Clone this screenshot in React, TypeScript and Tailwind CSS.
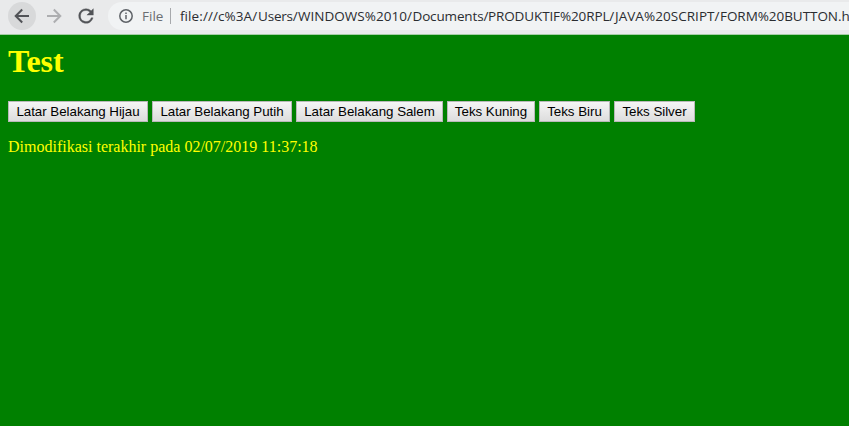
import { useState } from "react";

const pieces = [
  { text: "file:///c%3A/", style: "w-[78px] tracking-[0.08px]" },
  { text: "Users/", style: "w-[40px] tracking-[-0.2px]" },
  { text: "WINDOWS%2010/", style: "w-[114.5px] tracking-[0.03px]" },
  { text: "Documents/", style: "w-[75.5px] tracking-[-0.15px]" },
  { text: "PRODUKTIF%20RPL/", style: "w-[127px] tracking-[-0.12px]" },
  { text: "JAVA%20SCRIPT/", style: "w-[105px] tracking-[0.05px]" },
  { text: "FORM%20BUTTON.h", style: "w-[129px] tracking-[-0.05px]" },
];

const actions = [
  { label: "Latar Belakang Hijau", width: "w-[140px]", background: "#008000" },
  { label: "Latar Belakang Putih", width: "w-[140px]", background: "#ffffff" },
  { label: "Latar Belakang Salem", width: "w-[147px]", background: "#fa8072" },
  { label: "Teks Kuning", width: "w-[88px]", color: "#ffff00" },
  { label: "Teks Biru", width: "w-[71px]", color: "#0000ff" },
  { label: "Teks Silver", width: "w-[81px]", color: "#c0c0c0" },
];

function Toolbar() {
  return (
    <header className="flex h-[35px] items-start overflow-hidden border-b border-[#a5cda5] bg-[#e9eaeb] pl-2 font-['Open_Sans','Noto_Sans',sans-serif] text-[13.5px]">
      <div className="mt-[2px] flex size-7 shrink-0 items-center justify-center rounded-full bg-[#d8d9da]">
        <svg width="24" height="24" viewBox="0 0 24 24" fill="none" stroke="#515357" strokeWidth="2">
          <path d="M19 12H6M12.2 5.5 5.7 12l6.5 6.5" />
        </svg>
      </div>
      <svg className="mt-[4px] ml-[6px] shrink-0" width="24" height="24" viewBox="0 0 24 24" fill="none" stroke="#adaeb0" strokeWidth="2">
        <path d="M5 12h13M11.8 5.5l6.5 6.5-6.5 6.5" />
      </svg>
      <svg className="mt-[5px] ml-[9px] shrink-0" width="22" height="22" viewBox="0 0 24 24" fill="#515357" stroke="#515357" strokeWidth="0.4">
        <path d="M17.65 6.35A7.96 7.96 0 0 0 12 4a8 8 0 1 0 7.73 10h-2.08A6 6 0 1 1 12 6c1.66 0 3.14.69 4.22 1.78L13 11h7V4z" />
      </svg>
      <div className="mt-[2px] ml-[11px] flex h-7 w-[760px] shrink-0 items-center rounded-l-full bg-[#f1f3f4] pl-[11px]">
        <svg className="shrink-0" width="14" height="14" viewBox="0 0 14 14" fill="none" stroke="#5f6368" strokeWidth="1.5">
          <circle cx="7" cy="7" r="6.2" />
          <path d="M7 6v4.3M7 3.5V5" />
        </svg>
        <span className="ml-[9px] w-[28px] shrink-0 text-[#6b6e72]">File</span>
        <span className="h-4 w-px shrink-0 bg-[#a7a9ac]" />
        <div className="ml-[9px] flex whitespace-nowrap text-[#2b2d31]">
          {pieces.map((piece) => (
            <span key={piece.text} className={`shrink-0 ${piece.style}`}>{piece.text}</span>
          ))}
        </div>
      </div>
    </header>
  );
}

export default function App() {
  const [background, setBackground] = useState("#008000");
  const [color, setColor] = useState("#ffff00");

  return (
    <div className="flex h-[426px] w-full flex-col overflow-hidden">
      <Toolbar />
      <main className="flex-1 px-2 pt-[8px] font-['Liberation_Serif',serif]" style={{ background, color }}>
        <h1 className="text-[32px] leading-[37px] font-bold">Test</h1>
        <div className="mt-[21px] flex gap-1">
          {actions.map((action) => (
            <button
              key={action.label}
              className={`h-[21px] shrink-0 border border-[#b9b9b9] bg-linear-to-b from-[#f5f5f5] to-[#dddddd] text-center font-['Liberation_Sans',sans-serif] text-[13.333px] leading-[18px] tracking-[-0.03px] whitespace-nowrap text-black ${action.width}`}
              onClick={() => {
                if (action.background) setBackground(action.background);
                if (action.color) setColor(action.color);
              }}
            >
              {action.label}
            </button>
          ))}
        </div>
        <p className="mt-4 text-base leading-[18px]">Dimodifikasi terakhir pada 02/07/2019 11:37:18</p>
      </main>
    </div>
  );
}
